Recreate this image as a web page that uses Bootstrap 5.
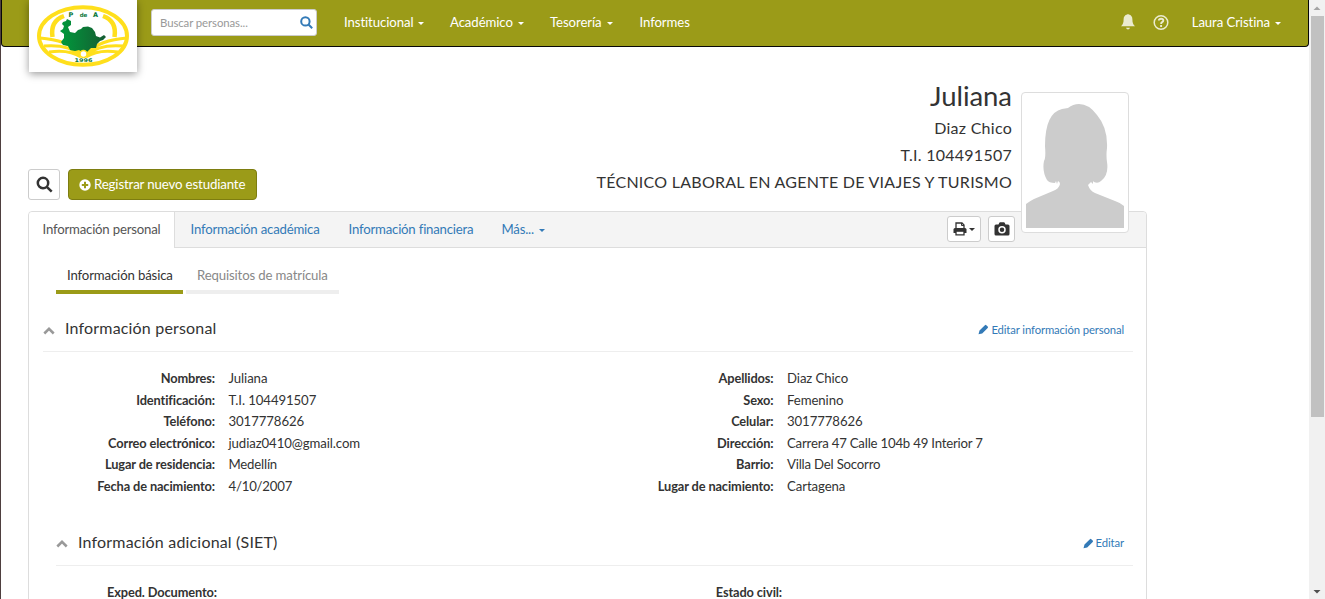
<!DOCTYPE html>
<html lang="es">
<head>
<meta charset="utf-8">
<meta name="viewport" content="width=device-width, initial-scale=1">
<title>Información personal</title>
<link href="https://cdn.jsdelivr.net/npm/bootstrap@5.3.0/dist/css/bootstrap.min.css" rel="stylesheet">
<style>
body{font-family:Lato,"Open Sans",sans-serif;font-size:13.2px;letter-spacing:-.09px;line-height:21.6px;color:#333;background:#fff}
.shell{border-left:1px solid #4e3f3f}
svg{display:block;flex:none}
a{text-decoration:none}
.topbar{height:47px;background:#9b9b18;border:1px solid #080808;border-top:0;border-radius:0 0 4px 4px;padding:0 27px 0 149px}
.brandbox{left:28px;top:0;width:108px;height:72px;background:#fff;box-shadow:0 2px 8px rgba(0,0,0,.4);z-index:3}
.finder{width:166px;height:27px;margin:9px 27px 0 0;border:1px solid #ccc;border-radius:3px;background:#fff;font-size:11.4px;color:#999;padding:0 3px 0 8px;flex:none}
.topbar a{display:block;color:#fff;line-height:45px}
.topbar svg{margin-top:13px}
.m-inst{width:106px}.m-acad{width:100px}.m-teso{width:89.5px}
.help-ic{margin-right:22px}
.tri{display:inline-block;border:3.5px solid transparent;border-top-color:currentColor;border-bottom:0;margin-left:5px;vertical-align:2px}
.content-area{padding-left:27px;width:1146px}
.student-head{height:164px;padding-right:135px}
.head-actions{padding-bottom:11px}
.tool-btn{display:flex;align-items:center;justify-content:center;border:1px solid #ccc;border-radius:3px;background:#fff;color:#333;padding:0}
.find-btn{width:32px;height:31px}
.new-btn{width:189px;height:31px;border:1px solid #7d7d10;border-radius:4px;background:#9b9b18;color:#fff;font-size:13.3px;letter-spacing:-.16px;padding:0 0 0 10px;gap:3px;white-space:nowrap}
.ident{padding-bottom:16px}
.student-name{font-size:27.5px;line-height:36px;letter-spacing:-.05px}
.student-line{font-size:16px;line-height:27px;letter-spacing:.26px}
.photo{left:993px;top:45px;width:108px;height:141px;border:1px solid #ddd;border-radius:4px;background:#fff;padding:4px;z-index:2}
.panel-box{border:1px solid #ddd;border-radius:4px 4px 0 0;height:420px}
.tabstrip{height:36px;background:#f4f4f4;border-bottom:1px solid #ddd;border-radius:4px 4px 0 0;padding-right:131px}
.tabstrip .nav-link{height:36px;padding:0;line-height:34px;color:#337ab7;white-space:nowrap;letter-spacing:-.2px}
.tabstrip .nav-link.active{width:146px;padding-left:13.5px;background:#fff;border-right:1px solid #ddd;color:#555;border-radius:4px 0 0 0}
.t-acad{width:158px;margin-left:15.5px}.t-fin{width:153px}
.print-btn{width:34px;height:26px}.cam-btn{width:27px;height:26px}
.strip-tools{gap:7px}
.print-btn .tri{border-width:3px 3px 0;margin-left:2px}
.subtabs{padding:12px 0 0 27px;gap:3px}
.subtabs .nav-link{height:34px;padding:0 0 0 11px;line-height:31px;border-bottom:4px solid #eee;color:#888;border-radius:0;white-space:nowrap;letter-spacing:-.14px}
.subtabs .nav-link.active{border-color:#9b9b18;color:#333;width:127px}
.st-req{width:153px}
.sec-head{height:46px;border-bottom:1px solid #eee;margin:12px 13px 0 14px}
.sec-inner{margin:22px 13px 0 27px}
.sec-head h2{font-size:16px;line-height:44px;letter-spacing:.18px;margin:0 0 1px 10px;font-weight:400}
.sec-head svg.chev{margin-top:3px}
.sec-head a{font-size:11.3px;letter-spacing:-.12px;color:#337ab7;margin:2px 9px 0 0;gap:2px}
.info-list{grid-template-columns:173px 358.500px 173px 1fr;grid-auto-rows:21.6px;column-gap:13.5px;padding:16px 0 0 13px;margin:0}
.info-more{grid-template-columns:161px 366px 172px 1fr;padding-left:27px}
.info-list dt,.info-list dd{margin:0;white-space:nowrap}
.info-list dt{text-align:right;font-size:12.8px;letter-spacing:-.12px}
.info-list dd.tight{letter-spacing:-.2px}
.sidebar-track{width:16px;background:#f1f1f1}
.thumb{width:13px;height:401px;background:#c1c1c1}
</style>
</head>
<body class="overflow-hidden">
<svg class="d-none"><defs>
 <path id="pencil" d="M.5 10.300L1.500 6.600 6.900 1.200q.7-.7 1.400 0l1.400 1.400q.7.7 0 1.400L4.200 9.400z"/>
</defs></svg>
<div class="shell d-flex vh-100 overflow-hidden">
 <main class="flex-grow-1 position-relative overflow-hidden">
  <a class="brandbox position-absolute" href="#" aria-label="P de A">
   <svg width="108" height="72" viewBox="0 0 108 72">
    <defs><linearGradient id="land"><stop offset="0" stop-color="#009a3c"/><stop offset="1" stop-color="#155c32"/></linearGradient></defs>
    <ellipse cx="54" cy="36" rx="44" ry="28.800" fill="#fff" stroke="#ffdf1c" stroke-width="4"/>
    <path d="M23.500 37Q21 21 35 16M85.500 37Q88 21 74 16" fill="none" stroke="#ffdf1c" stroke-width="4.500"/>
    <path d="M11 38Q38 40 52 53M15 46Q39 44 52 55M20 52Q40 49 52 57M98 38Q71 40 57 53M94 46Q70 44 57 55M89 52Q69 49 57 57" fill="none" stroke="#ffdf1c" stroke-width="3"/>
    <path d="M34 22L37 21 38 19 42 21 42 25 39 27 41 32 46 33 49 30 52 29 54 27 59 26.500 63 28 66 32 67 36 71 37.500 75 35 77 37 74 40 71 41 68 44 67 48 62 48 58 52 53 52 50 50 46 51 41 50 39 46 34 45 32 42 35 38 35 34 31 31 34 29 35 26 33 24z" fill="url(#land)"/>
    <circle cx="54.500" cy="54" r="3.500" fill="#fff" stroke="#ffdf1c" stroke-width="1.500"/>
    <g fill="#08763a" font-family="DejaVu Sans" font-weight="bold" text-anchor="middle" letter-spacing="0"><text x="42" y="17" font-size="6.500">P</text><text x="54.500" y="16.500" font-size="5.500">de</text><text x="66.500" y="17" font-size="6.500">A</text><text x="54.500" y="62" font-size="5" textLength="18" lengthAdjust="spacingAndGlyphs">1996</text></g>
   </svg>
  </a>
  <nav class="topbar d-flex align-items-start">
   <div class="finder d-flex align-items-center justify-content-between"><span>Buscar personas...</span>
    <svg class="m-0" width="13" height="13" viewBox="0 0 13 13" fill="none" stroke="#337ab7" stroke-width="2"><circle cx="5.400" cy="5.400" r="4.200"/><path d="M8.500 8.500l3.700 3.700"/></svg></div>
   <a class="m-inst" href="#">Institucional<i class="tri"></i></a>
   <a class="m-acad" href="#">Académico<i class="tri"></i></a>
   <a class="m-teso" href="#">Tesorería<i class="tri"></i></a>
   <a href="#">Informes</a>
   <svg class="ms-auto me-3" width="16" height="18" viewBox="0 0 16 18" fill="#fff" fill-opacity=".8"><path d="M7.200 1.500q.8-1 1.600 0 3.600.8 3.600 5c0 3.500.8 5.200 2.600 6.700H1c1.800-1.500 2.600-3.200 2.600-6.700q0-4.200 3.600-5zM6 14.800h4q-.5 1.700-2 1.700t-2-1.700z"/></svg>
   <svg class="help-ic" width="18" height="18" viewBox="0 0 18 18" fill="none" stroke="#fff" stroke-opacity=".8"><circle cx="9" cy="9.500" r="6.800" stroke-width="1.500"/><path d="M6.800 7.500Q7 5.700 9.100 5.700q2.200 0 2.200 1.800 0 1-1.200 1.600-1 .6-1 1.800M9.100 12v2" stroke-width="1.900"/></svg>
   <a href="#">Laura Cristina<i class="tri"></i></a>
  </nav>
  <section class="content-area">
   <header class="student-head d-flex justify-content-between align-items-end position-relative">
    <div class="head-actions d-flex gap-2">
     <button class="tool-btn find-btn" aria-label="Buscar"><svg width="17" height="17" viewBox="0 0 17 17" fill="none" stroke="#333" stroke-width="2.500"><circle cx="7" cy="7" r="5.200"/><path d="M10.800 10.800l4.900 4.900"/></svg></button>
     <button class="new-btn d-flex align-items-center"><svg width="12" height="12" viewBox="0 0 12 12"><circle cx="6" cy="6" r="5.700" fill="#fff"/><path d="M6 2.800v6.400M2.800 6h6.400" stroke="#9b9b18" stroke-width="2"/></svg><span>Registrar nuevo estudiante</span></button>
    </div>
    <div class="ident text-end">
     <div class="student-name">Juliana</div><div class="student-line">Diaz Chico</div><div class="student-line">T.I. 104491507</div><div class="student-line">TÉCNICO LABORAL EN AGENTE DE VIAJES Y TURISMO</div>
    </div>
    <div class="photo position-absolute"><svg width="98" height="131" viewBox="0 0 98 131" fill="#ccc"><path d="M0 131V106Q4 103 8 101L27 93Q33 91 34 86q0-2-2-3l-1 3-1-3-1 2q-6 0-8-3-5-9-3-19Q20 60 19 48 19 15 36 11l6-1q5-4 11-4 10 0 18 11 11 13 10 33-1 7 0 14 2 13-6 19-3 3-7 1l-1-1v3l-2-2-1 1-2 2q2 6 7 8l20 8q6 2 9 5v23z" transform="translate(0 1)"/></svg></div>
   </header>
   <div class="panel-box">
    <div class="tabstrip nav flex-nowrap"><a class="nav-link active">Información personal</a><a class="nav-link t-acad">Información académica</a><a class="nav-link t-fin">Información financiera</a><a class="nav-link">Más...<i class="tri"></i></a>
     <div class="strip-tools d-flex ms-auto mt-1 align-items-start">
      <button class="tool-btn print-btn" aria-label="Imprimir"><svg width="14" height="14" viewBox="0 0 14 14"><path d="M3 6.500V1h6l2 2v3.500" fill="#fff" stroke="#333" stroke-width="1.300"/><path d="M8.500 1v2.500H11" fill="none" stroke="#333"/><path d="M.5 11V7.500Q.5 6 2 6h10q1.500 0 1.500 1.500V11z" fill="#333"/><path d="M3 9.200h8v3.600H3z" fill="#fff" stroke="#333" stroke-width="1.300"/></svg><i class="tri"></i></button>
      <button class="tool-btn cam-btn" aria-label="Cámara"><svg width="16" height="14" viewBox="0 0 16 14"><path d="M2 2.500h2.500L5.300.7q.2-.4.700-.4h4q.5 0 .7.400l.8 1.800H14q1.500 0 1.500 1.500v8q0 1.500-1.500 1.500H2Q.5 13.500.5 12V4Q.5 2.500 2 2.500z" fill="#333"/><circle cx="8" cy="7.800" r="3" fill="none" stroke="#fff" stroke-width="1.500"/></svg></button>
     </div>
    </div>
    <div class="subtabs nav"><a class="nav-link active">Información básica</a><a class="nav-link st-req">Requisitos de matrícula</a></div>
    <div class="sec-head d-flex align-items-center"><svg class="chev" width="12" height="9" viewBox="0 0 12 9" fill="none" stroke="#999" stroke-width="2.500"><path d="M1.300 7.500L6 2.800l4.700 4.700"/></svg><h2>Información personal</h2><a class="ms-auto d-flex align-items-center" href="#"><svg width="11" height="11" fill="#337ab7"><use href="#pencil"/></svg>Editar información personal</a></div>
    <dl class="info-list d-grid">
     <dt>Nombres:</dt><dd>Juliana</dd><dt>Apellidos:</dt><dd>Diaz Chico</dd>
     <dt>Identificación:</dt><dd>T.I. 104491507</dd><dt>Sexo:</dt><dd>Femenino</dd>
     <dt>Teléfono:</dt><dd>3017778626</dd><dt>Celular:</dt><dd>3017778626</dd>
     <dt>Correo electrónico:</dt><dd>judiaz0410@gmail.com</dd><dt>Dirección:</dt><dd class="tight">Carrera 47 Calle 104b 49 Interior 7</dd>
     <dt>Lugar de residencia:</dt><dd class="tight">Medellín</dd><dt>Barrio:</dt><dd class="tight">Villa Del Socorro</dd>
     <dt>Fecha de nacimiento:</dt><dd class="tight">4/10/2007</dd><dt>Lugar de nacimiento:</dt><dd>Cartagena</dd>
    </dl>
    <div class="sec-head sec-inner d-flex align-items-center"><svg class="chev" width="12" height="9" viewBox="0 0 12 9" fill="none" stroke="#999" stroke-width="2.500"><path d="M1.300 7.500L6 2.800l4.700 4.700"/></svg><h2>Información adicional (SIET)</h2><a class="ms-auto d-flex align-items-center" href="#"><svg width="11" height="11" fill="#337ab7"><use href="#pencil"/></svg>Editar</a></div>
    <dl class="info-list info-more d-grid"><dt>Exped. Documento:</dt><dd></dd><dt>Estado civil:</dt><dd></dd></dl>
   </div>
  </section>
 </main>
 <aside class="sidebar-track d-flex flex-column align-items-center flex-shrink-0">
  <svg width="16" height="16"><path d="M4.500 10h7L8 6.500z" fill="#a3a3a3"/></svg>
  <div class="thumb"></div>
  <svg class="mt-auto" width="16" height="16"><path d="M4.500 7h7L8 10.500z" fill="#505050"/></svg>
 </aside>
</div>
<script src="https://cdn.jsdelivr.net/npm/bootstrap@5.3.0/dist/js/bootstrap.bundle.min.js"></script>
</body>
</html>
